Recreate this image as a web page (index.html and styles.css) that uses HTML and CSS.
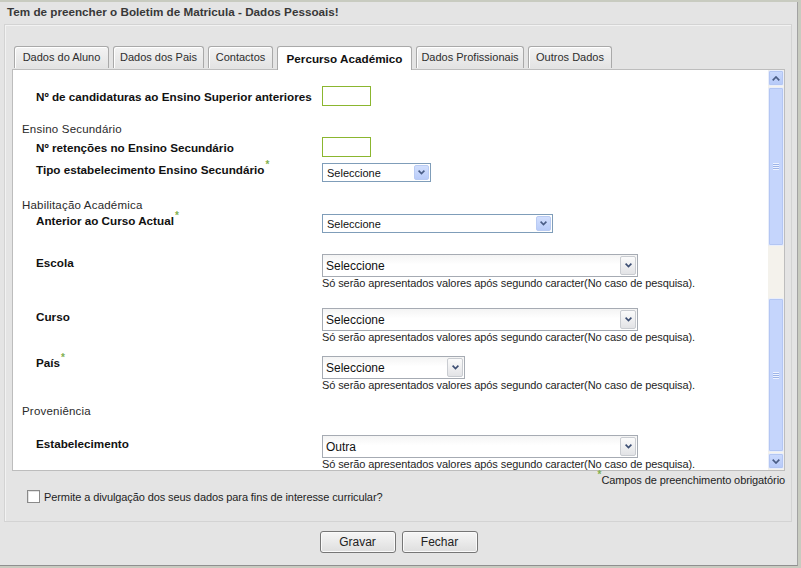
FILE: index.html
```html
<!DOCTYPE html>
<html lang="pt">
<head>
<meta charset="utf-8">
<title>Boletim de Matricula</title>
<link rel="stylesheet" href="styles.css">
</head>
<body>
<div class="window">
  <div class="titlebar">Tem de preencher o Boletim de Matricula - Dados Pessoais!</div>
  <div class="panel">
    <div class="tabs">
      <div class="tab t1">Dados do Aluno</div>
      <div class="tab t2">Dados dos Pais</div>
      <div class="tab t3">Contactos</div>
      <div class="tab t4 active">Percurso Académico</div>
      <div class="tab t5">Dados Profissionais</div>
      <div class="tab t6">Outros Dados</div>
    </div>
    <div class="tabbody">
      <div class="form">
        <div class="row r1">
          <div class="lbl">Nº de candidaturas ao Ensino Superior anteriores</div>
          <div class="fld"><div class="txtin"></div></div>
        </div>
        <div class="sec s1">Ensino Secundário</div>
        <div class="row r2">
          <div class="lbl">Nº retenções no Ensino Secundário</div>
          <div class="fld"><div class="txtin"></div></div>
        </div>
        <div class="row r3">
          <div class="lbl">Tipo estabelecimento Ensino Secundário<sup class="req">*</sup></div>
          <div class="fld">
            <div class="ssel w108"><span>Seleccione</span><span class="sarrow"><svg width="7" height="5" viewBox="0 0 7 5"><path d="M0.6 0.6 L3.5 3.6 L6.4 0.6" stroke="#4a5d86" stroke-width="1.6" fill="none"/></svg></span></div>
          </div>
        </div>
        <div class="sec s2">Habilitação Académica</div>
        <div class="row r4">
          <div class="lbl">Anterior ao Curso Actual<sup class="req">*</sup></div>
          <div class="fld">
            <div class="ssel w230"><span>Seleccione</span><span class="sarrow"><svg width="7" height="5" viewBox="0 0 7 5"><path d="M0.6 0.6 L3.5 3.6 L6.4 0.6" stroke="#4a5d86" stroke-width="1.6" fill="none"/></svg></span></div>
          </div>
        </div>
        <div class="row r5">
          <div class="lbl">Escola</div>
          <div class="fld">
            <div class="bsel w315"><span>Seleccione</span><span class="barrow"><svg width="7" height="5" viewBox="0 0 7 5"><path d="M0.6 0.6 L3.5 3.6 L6.4 0.6" stroke="#3b4d72" stroke-width="1.6" fill="none"/></svg></span></div>
            <div class="hint">Só serão apresentados valores após segundo caracter(No caso de pesquisa).</div>
          </div>
        </div>
        <div class="row r6">
          <div class="lbl">Curso</div>
          <div class="fld">
            <div class="bsel w315"><span>Seleccione</span><span class="barrow"><svg width="7" height="5" viewBox="0 0 7 5"><path d="M0.6 0.6 L3.5 3.6 L6.4 0.6" stroke="#3b4d72" stroke-width="1.6" fill="none"/></svg></span></div>
            <div class="hint">Só serão apresentados valores após segundo caracter(No caso de pesquisa).</div>
          </div>
        </div>
        <div class="row r7">
          <div class="lbl">País<sup class="req">*</sup></div>
          <div class="fld">
            <div class="bsel w142"><span>Seleccione</span><span class="barrow"><svg width="7" height="5" viewBox="0 0 7 5"><path d="M0.6 0.6 L3.5 3.6 L6.4 0.6" stroke="#3b4d72" stroke-width="1.6" fill="none"/></svg></span></div>
            <div class="hint">Só serão apresentados valores após segundo caracter(No caso de pesquisa).</div>
          </div>
        </div>
        <div class="sec s3">Proveniência</div>
        <div class="row r8">
          <div class="lbl">Estabelecimento</div>
          <div class="fld">
            <div class="bsel w315"><span>Outra</span><span class="barrow"><svg width="7" height="5" viewBox="0 0 7 5"><path d="M0.6 0.6 L3.5 3.6 L6.4 0.6" stroke="#3b4d72" stroke-width="1.6" fill="none"/></svg></span></div>
            <div class="hint">Só serão apresentados valores após segundo caracter(No caso de pesquisa).</div>
          </div>
        </div>
      </div>
      <div class="scrollbar">
        <div class="sbtn"><svg width="8" height="5" viewBox="0 0 8 5"><path d="M0.7 4.3 L4 1 L7.3 4.3" stroke="#4a5d86" stroke-width="1.7" fill="none"/></svg></div>
        <div class="thumb th1"><span class="grip"></span></div>
        <div class="track"></div>
        <div class="thumb th2"><span class="grip"></span></div>
        <div class="sbtn"><svg width="8" height="5" viewBox="0 0 8 5"><path d="M0.7 0.7 L4 4 L7.3 0.7" stroke="#4a5d86" stroke-width="1.7" fill="none"/></svg></div>
      </div>
    </div>
    <div class="required"><sup class="req">*</sup>Campos de preenchimento obrigatório</div>
    <div class="consent"><span class="checkbox"></span><span>Permite a divulgação dos seus dados para fins de interesse curricular?</span></div>
  </div>
  <div class="buttons">
    <button class="btn">Gravar</button>
    <button class="btn">Fechar</button>
  </div>
</div>
</body>
</html>
```
FILE: styles.css
```css
html, body {
  margin: 0;
  padding: 0;
}
body {
  background: #c8cbc0;
  width: 801px;
  height: 568px;
  overflow: hidden;
  font-family: "Liberation Sans", Arial, sans-serif;
  font-size: 11px;
  color: #1a1a1a;
}
.window {
  margin-top: 2px;
  width: 798px;
  height: 564px;
  background: #e4e4e4;
  border-right: 1px solid #a2a2a2;
  border-bottom: 1px solid #8f8f8f;
  box-sizing: border-box;
}
.titlebar {
  height: 22px;
  line-height: 20px;
  padding-left: 7px;
  font-weight: bold;
  font-size: 11.7px;
  color: #383838;
}
.panel {
  margin-left: 4px;
  width: 788px;
  height: 498px;
  box-sizing: border-box;
  border: 1px solid #d3d3d3;
  box-shadow: inset 1px 1px 0 #f2f2f2;
  padding: 19px 7px 0 7px;
}
.tabs {
  display: flex;
  align-items: flex-end;
  gap: 4px;
  height: 25px;
  padding-left: 2px;
}
.tab {
  height: 22px;
  box-sizing: border-box;
  border: 1px solid #a9a9a9;
  border-bottom: none;
  border-radius: 3px 3px 0 0;
  background: linear-gradient(#f3f3f3, #e3e3e3);
  box-shadow: inset 1px 1px 0 #ffffff;
  line-height: 21px;
  text-align: center;
  color: #2e2e2e;
  font-size: 11px;
  margin-bottom: 1px;
}
.t1 { width: 95px; }
.t2 { width: 91px; }
.t3 { width: 65px; }
.t4 { width: 135px; }
.t5 { width: 108px; }
.t6 { width: 84px; }
.tab.active {
  height: 24px;
  margin-bottom: -1px;
  background: #ffffff;
  font-weight: bold;
  font-size: 11.7px;
  color: #111;
  position: relative;
  z-index: 1;
  line-height: 23px;
}
.tabbody {
  display: flex;
  width: 773px;
  height: 402px;
  box-sizing: border-box;
  border: 1px solid #bdbdbd;
  background: #ffffff;
}
.form {
  flex: 1;
  overflow: hidden;
  padding-left: 9px;
}
.sec {
  height: 13px;
  line-height: 13px;
  font-size: 11.5px;
  letter-spacing: 0.2px;
  color: #2a2a2a;
}
.row {
  display: grid;
  grid-template-columns: 286px auto;
  margin-left: 14px;
}
.lbl {
  font-weight: bold;
  font-size: 11.7px;
  line-height: 13px;
  color: #111;
}
.fld {
  display: flex;
  flex-direction: column;
  align-items: flex-start;
}
.r1 { margin-top: 16px; }
.r1 .lbl { padding-top: 4px; }
.s1 { margin-top: 17px; }
.r2 { margin-top: 1px; }
.r2 .lbl { padding-top: 4px; }
.r3 { margin-top: 6px; }
.s2 { margin-top: 17px; }
.r4 { margin-top: 2px; }
.r5 { margin-top: 21px; }
.r5 .lbl { padding-top: 2px; }
.r6 { margin-top: 18px; }
.r6 .lbl { padding-top: 2px; }
.r7 { margin-top: 12px; }
.s3 { margin-top: 13px; }
.r8 { margin-top: 17px; }
.r8 .lbl { padding-top: 2px; }

.req {
  color: #7fb04f;
  font-size: 10px;
  font-weight: bold;
  vertical-align: baseline;
  line-height: 0;
  margin-left: 1px;
  position: relative;
  top: -6px;
}
.txtin {
  width: 49px;
  height: 20px;
  box-sizing: border-box;
  border: 1px solid #8bb62f;
  background: #fff;
}
.ssel {
  height: 19px;
  box-sizing: border-box;
  border: 1px solid #7f9db9;
  background: #fff;
  display: flex;
  align-items: center;
  justify-content: space-between;
  padding: 1px 1px 1px 4px;
  font-size: 11px;
  color: #111;
}
.sarrow {
  width: 15px;
  height: 15px;
  box-sizing: border-box;
  border: 1px solid #b9cbf3;
  border-radius: 2px;
  background: linear-gradient(#d2dffd, #b9ccf9);
  display: flex;
  align-items: center;
  justify-content: center;
}
.w108 { width: 109px; }
.w230 { width: 231px; }
.bsel {
  height: 23px;
  box-sizing: border-box;
  border: 1px solid #a6abb3;
  background: linear-gradient(#f4f4f4, #ffffff 45%);
  display: flex;
  align-items: center;
  justify-content: space-between;
  padding: 1px 1px 1px 3px;
  font-size: 12px;
  color: #111;
}
.barrow {
  width: 16px;
  height: 19px;
  box-sizing: border-box;
  border: 1px solid #c9ccd1;
  border-radius: 2px;
  background: linear-gradient(#fbfbfb, #e2e3e6);
  display: flex;
  align-items: center;
  justify-content: center;
}
.w315 { width: 316px; }
.w142 { width: 143px; }
.hint {
  line-height: 13px;
  height: 13px;
  white-space: nowrap;
  letter-spacing: -0.1px;
  color: #1e1e1e;
}

.scrollbar {
  width: 16px;
  background: #f4f2ec;
  display: flex;
  flex-direction: column;
  gap: 1px;
}
.sbtn {
  height: 16px;
  box-sizing: border-box;
  border: 1px solid #e9eefb;
  border-radius: 2px;
  background: linear-gradient(#cbdafd, #b6c9f8);
  box-shadow: inset 0 0 0 1px #b3c6f3;
  display: flex;
  align-items: center;
  justify-content: center;
}
.thumb {
  box-sizing: border-box;
  border: 1px solid #e9eefb;
  border-radius: 2px;
  background: #c5d5fc;
  box-shadow: inset 0 0 0 1px #b3c6f3;
  display: flex;
  align-items: center;
  justify-content: center;
}
.th1 { height: 159px; }
.th2 { height: 154px; }
.track { height: 50px; }
.grip {
  width: 6px;
  height: 7px;
  background: repeating-linear-gradient(#eef3ff 0 1px, #9db4e8 1px 2px);
}

.required {
  margin-top: 3px;
  line-height: 13px;
  height: 13px;
  text-align: right;
  width: 773px;
  letter-spacing: -0.1px;
  color: #1e1e1e;
}
.consent {
  display: flex;
  align-items: center;
  margin-top: 3px;
  margin-left: 15px;
  gap: 4px;
  letter-spacing: -0.1px;
  color: #1e1e1e;
}
.checkbox {
  width: 13px;
  height: 13px;
  box-sizing: border-box;
  border: 1px solid #8a8a8a;
  background: #fff;
  box-shadow: inset 1px 1px 0 #e2e2e2;
}
.buttons {
  display: flex;
  justify-content: center;
  gap: 6px;
  margin-top: 9px;
}
.btn {
  width: 76px;
  height: 22px;
  box-sizing: border-box;
  border: 1px solid #767676;
  border-radius: 3px;
  background: linear-gradient(#f6f6f6, #dedede);
  box-shadow: inset 0 0 0 1px #fafafa;
  font-family: "Liberation Sans", Arial, sans-serif;
  font-size: 12px;
  color: #222;
  padding: 0;
}
```
